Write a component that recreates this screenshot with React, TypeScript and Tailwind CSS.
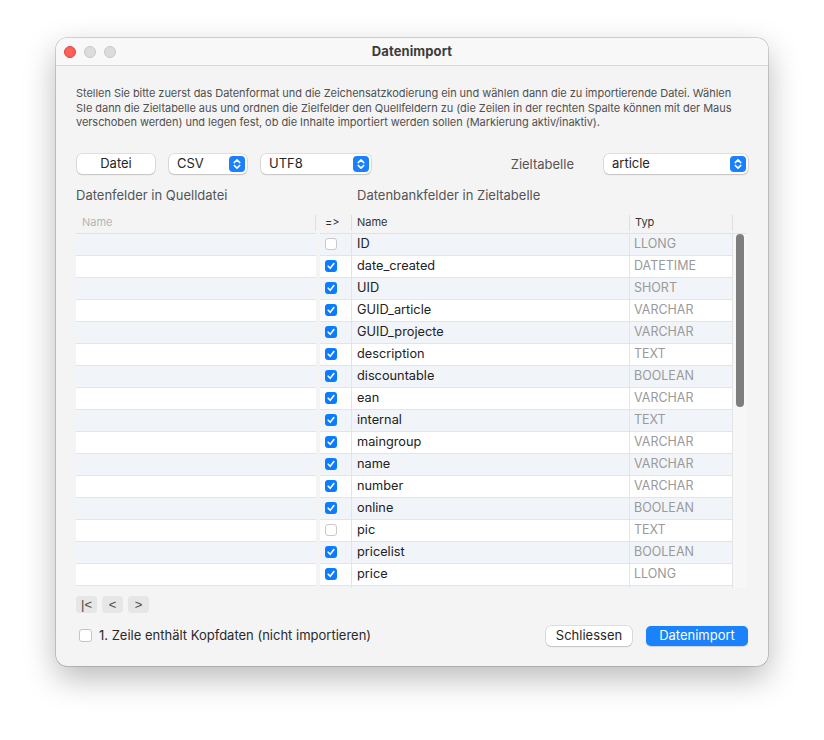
import React from "react";

const rows: { name: string; typ: string; checked: boolean }[] = [
  { name: "ID", typ: "LLONG", checked: false },
  { name: "date_created", typ: "DATETIME", checked: true },
  { name: "UID", typ: "SHORT", checked: true },
  { name: "GUID_article", typ: "VARCHAR", checked: true },
  { name: "GUID_projecte", typ: "VARCHAR", checked: true },
  { name: "description", typ: "TEXT", checked: true },
  { name: "discountable", typ: "BOOLEAN", checked: true },
  { name: "ean", typ: "VARCHAR", checked: true },
  { name: "internal", typ: "TEXT", checked: true },
  { name: "maingroup", typ: "VARCHAR", checked: true },
  { name: "name", typ: "VARCHAR", checked: true },
  { name: "number", typ: "VARCHAR", checked: true },
  { name: "online", typ: "BOOLEAN", checked: true },
  { name: "pic", typ: "TEXT", checked: false },
  { name: "pricelist", typ: "BOOLEAN", checked: true },
  { name: "price", typ: "LLONG", checked: true },
  { name: "", typ: "", checked: false },
];

function Stepper() {
  return (
    <svg width="16" height="16" viewBox="0 0 16 16" className="shrink-0">
      <rect x="0" y="0" width="16" height="16" rx="4" fill="#1a80fb" />
      <path d="M5.2 6.6 L8 3.9 L10.8 6.6" stroke="white" strokeWidth="1.5" fill="none" strokeLinecap="round" strokeLinejoin="round" />
      <path d="M5.2 9.4 L8 12.1 L10.8 9.4" stroke="white" strokeWidth="1.5" fill="none" strokeLinecap="round" strokeLinejoin="round" />
    </svg>
  );
}

function Select({ label, w }: { label: string; w: string }) {
  return (
    <div className={`${w} h-[20px] bg-white rounded-[5px] shadow-[0_0_0_0.5px_rgba(0,0,0,0.18),0_1px_1.5px_rgba(0,0,0,0.12)] flex items-center justify-between pl-[8px] pr-[2px]`}>
      <span className="text-[13px] text-[#262626] leading-none">{label}</span>
      <Stepper />
    </div>
  );
}

function Check({ checked }: { checked: boolean }) {
  if (checked) {
    return (
      <div className="w-[12px] h-[12px] rounded-[3px] bg-[#0b7bff] flex items-center justify-center">
        <svg width="10" height="10" viewBox="0 0 10 10">
          <path d="M2.2 5.2 L4.2 7.3 L7.9 2.6" stroke="white" strokeWidth="1.6" fill="none" strokeLinecap="round" strokeLinejoin="round" />
        </svg>
      </div>
    );
  }
  return <div className="w-[12px] h-[12px] rounded-[3px] bg-white border border-[#c9c9c9]" />;
}

export default function App() {
  return (
    <div className="w-[824px] h-[740px] bg-white pt-[38px] pl-[56px] font-['Inter','Liberation_Sans',sans-serif] [font-feature-settings:'calt'_0,'liga'_0] [font-variant-ligatures:none]">
      <div className="w-[712px] h-[628px] rounded-[11px] bg-[#f4f4f4] shadow-[0_0_0_0.5px_rgba(0,0,0,0.3),0_12px_32px_rgba(0,0,0,0.28)] overflow-hidden flex flex-col">
        {/* Title bar */}
        <div className="h-[28px] shrink-0 bg-[#f8f8f8] border-b border-[#dadada] relative flex items-center justify-center">
          <div className="absolute left-[8px] top-[8px] flex gap-[8px]">
            <div className="w-[12px] h-[12px] rounded-full bg-[#fe5f57] border-[0.5px] border-[#e0443e]" />
            <div className="w-[12px] h-[12px] rounded-full bg-[#dcdcdc] border-[0.5px] border-[#c8c8c8]" />
            <div className="w-[12px] h-[12px] rounded-full bg-[#dcdcdc] border-[0.5px] border-[#c8c8c8]" />
          </div>
          <span className="text-[13px] font-bold text-[#3c3c3c] tracking-[0.1px]">Datenimport</span>
        </div>

        {/* Body */}
        <div className="flex-1 flex flex-col px-[20px] pt-[20px]">
          <div className="text-[11px] leading-[14.5px] text-[#505050] whitespace-nowrap tracking-[-0.05px]">
            <div>Stellen Sie bitte zuerst das Datenformat und die Zeichensatzkodierung ein und wählen dann die zu importierende Datei. Wählen</div>
            <div>SIe dann die Zieltabelle aus und ordnen die Zielfelder den Quellfeldern zu (die Zeilen in der rechten Spalte können mit der Maus</div>
            <div>verschoben werden) und legen fest, ob die Inhalte importiert werden sollen (Markierung aktiv/inaktiv).</div>
          </div>

          {/* Controls */}
          <div className="mt-[24px] flex items-center h-[20px]">
            <div className="ml-[1px] w-[78px] h-[20px] bg-white rounded-[5px] shadow-[0_0_0_0.5px_rgba(0,0,0,0.18),0_1px_1.5px_rgba(0,0,0,0.12)] flex items-center justify-center text-[13px] text-[#262626]">
              Datei
            </div>
            <div className="ml-[14px]">
              <Select label="CSV" w="w-[78px]" />
            </div>
            <div className="ml-[14px]">
              <Select label="UTF8" w="w-[110px]" />
            </div>
            <div className="flex-1" />
            <span className="text-[13px] text-[#555555] mr-[30px] mt-[2px]">Zieltabelle</span>
            <Select label="article" w="w-[144px]" />
          </div>

          {/* Labels */}
          <div className="mt-[14px] h-[16px] flex items-center text-[13px] text-[#555555]">
            <div className="w-[281px]">Datenfelder in Quelldatei</div>
            <div>Datenbankfelder in Zieltabelle</div>
          </div>

          {/* Tables */}
          <div className="mt-[9px] flex gap-[4px]">
            {/* Left table */}
            <div className="w-[240px] flex flex-col">
              <div className="h-[21px] border-b border-[#e2e2e2] flex items-center relative">
                <span className="pl-[6px] text-[11px] text-[#b4b4b4]">Name</span>
                <div className="absolute right-0 top-[2px] bottom-[2px] w-px bg-[#dedede]" />
              </div>
              <div className="h-[354px] overflow-hidden">
                {rows.map((r, i) => (
                  <div key={i} className={`h-[22px] border-b border-[#e4e4e4] ${i % 2 === 0 ? "bg-[#f1f4f8]" : "bg-white"}`} />
                ))}
              </div>
            </div>

            {/* Right table */}
            <div className="w-[427px] flex flex-col">
              <div className="h-[21px] border-b border-[#e2e2e2] flex items-stretch text-[11px] text-[#333333]">
                <div className="w-[32px] flex items-center pl-[5px] border-r border-[#dedede] my-[2px]">=&gt;</div>
                <div className="w-[278px] flex items-center pl-[5px] border-r border-[#dedede] my-[2px]">Name</div>
                <div className="w-[103px] flex items-center pl-[5px] border-r border-[#dedede] my-[2px]">Typ</div>
                <div className="flex-1" />
              </div>
              <div className="h-[354px] flex overflow-hidden">
                <div className="w-[413px] flex flex-col">
                  {rows.map((r, i) => (
                    <div key={i} className={`h-[22px] shrink-0 border-b border-[#e4e4e4] flex items-stretch ${i % 2 === 0 ? "bg-[#f1f4f8]" : "bg-white"}`}>
                      <div className="w-[32px] border-r border-[#e4e4e4] flex items-center pl-[5px]">
                        {r.name !== "" && <Check checked={r.checked} />}
                      </div>
                      <div className="w-[278px] border-r border-[#e4e4e4] flex items-center pl-[5px] text-[12.75px] text-[#222222]">
                        {r.name}
                      </div>
                      <div className="flex-1 border-r border-[#e4e4e4] flex items-center pl-[4px] text-[12.5px] text-[#9a9a9a]">
                        {r.typ}
                      </div>
                    </div>
                  ))}
                </div>
                <div className="flex-1 bg-[#f7f7f7] pl-[3px]">
                  <div className="w-[8px] h-[173px] rounded-full bg-[#7e7e7e]" />
                </div>
              </div>
            </div>
          </div>

          {/* Nav */}
          <div className="mt-[8px] flex gap-[5px] text-[13px] text-[#4a4a4a] font-['Liberation_Sans',sans-serif]">
            <div className="w-[21px] h-[17px] rounded-[4px] bg-[#e6e6e6] flex items-center justify-center leading-none">|&lt;</div>
            <div className="w-[21px] h-[17px] rounded-[4px] bg-[#e6e6e6] flex items-center justify-center leading-none">&lt;</div>
            <div className="w-[21px] h-[17px] rounded-[4px] bg-[#e6e6e6] flex items-center justify-center leading-none">&gt;</div>
          </div>

          {/* Bottom */}
          <div className="mt-[13px] flex items-center h-[20px]">
            <div className="ml-[3px] w-[13px] h-[13px] rounded-[3px] bg-white border border-[#c4c4c4]" />
            <span className="ml-[7px] text-[13px] text-[#2a2a2a]">1. Zeile enthält Kopfdaten (nicht importieren)</span>
            <div className="flex-1" />
            <div className="w-[86px] h-[20px] bg-white rounded-[5px] shadow-[0_0_0_0.5px_rgba(0,0,0,0.18),0_1px_1.5px_rgba(0,0,0,0.12)] flex items-center justify-center text-[13px] text-[#262626]">
              Schliessen
            </div>
            <div className="ml-[14px] w-[102px] h-[20px] rounded-[5px] bg-[#1a82fb] flex items-center justify-center text-[13px] text-white shadow-[0_0.5px_1px_rgba(0,0,0,0.15)]">
              Datenimport
            </div>
          </div>
        </div>
      </div>
    </div>
  );
}
